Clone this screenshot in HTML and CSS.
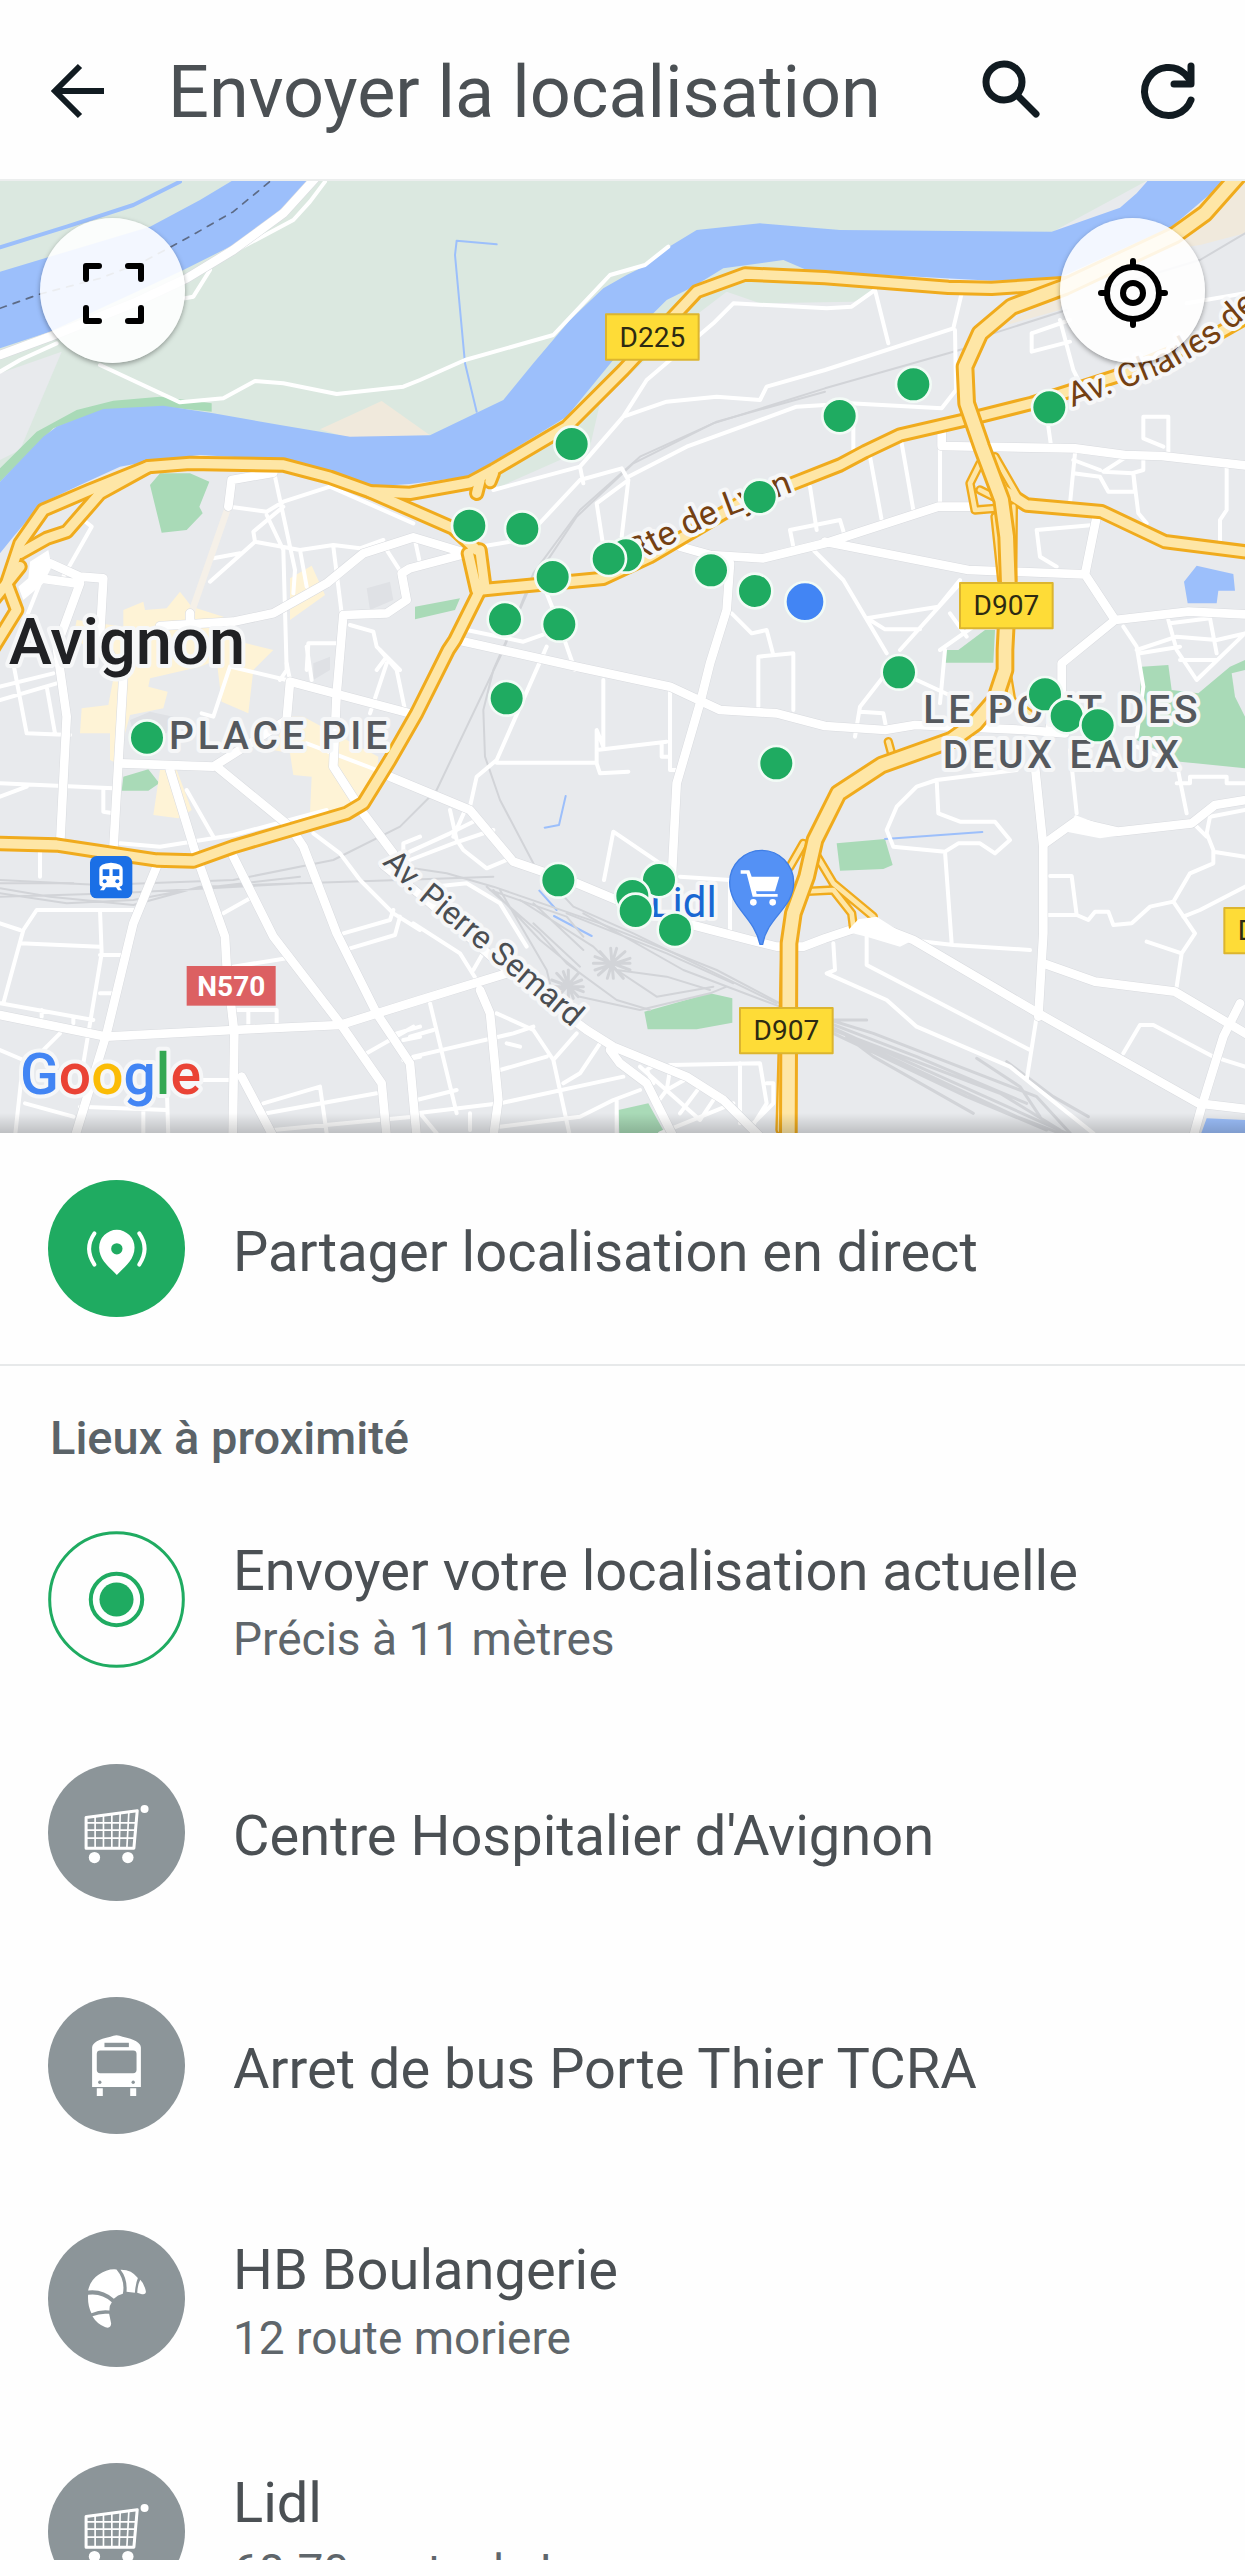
FILE: index.html
```html
<!DOCTYPE html>
<html lang="fr">
<head>
  <meta charset="UTF-8">
  <meta name="viewport" content="width=device-width, initial-scale=1.0">
  <title>Envoyer la localisation</title>
  <link rel="stylesheet" href="styles.css">
</head>
<body>
  <header class="topbar">
    <button type="button" class="icon-btn" aria-label="Retour">
      <svg viewBox="0 0 72 72"><path d="M62 37H13M38 12L13 37l25 25" fill="none" stroke="#111b21" stroke-width="6"/></svg>
    </button>
    <h1>Envoyer la localisation</h1>
    <button type="button" class="icon-btn" aria-label="Rechercher">
      <svg viewBox="0 0 72 72"><g fill="none" stroke="#111b21" stroke-width="7" stroke-linecap="round"><circle cx="29" cy="28" r="18"/><path d="M43 42l18 18"/></g></svg>
    </button>
    <button type="button" class="icon-btn" aria-label="Actualiser">
      <svg viewBox="0 0 72 72"><g fill="none" stroke="#111b21" stroke-width="7" stroke-linecap="round" stroke-linejoin="round"><path d="M60 46A24 24 0 1 1 54 20L59 26"/><path d="M60 12V30H43"/></g></svg>
    </button>
  </header>

  <section class="map">
    <svg class="map-canvas" viewBox="0 33 3735 2856" role="img" aria-label="Carte d'Avignon">
      <defs>
        <!-- main yellow roads -->
        <g id="roads-main">
          <path d="M-30 1450L50 1320 20 1240 60 1120 130 1020 270 960 445 890 570 880 850 885 990 922 1110 965 1230 970 1410 938 1480 900 1700 770 1870 600 2090 365 2235 312 2475 323 2845 352 2975 355 3200 340"/>
          <path d="M60 1150L140 1105 200 1085 300 970 445 890M60 1190L-20 1290"/>
          <path d="M1110 965L1360 1075 1430 1140M1405 1150L1430 1260M1440 1140L1455 1255"/>
          <path d="M1440 1260L1810 1225 1950 1160 2220 1000 2380 940 2520 885 2595 845 2700 795 2895 750 3095 700 3345 620 3655 490 3760 430"/>
          <path d="M1440 1260L1365 1410 1345 1440 1250 1630 1170 1770 1090 1900 1040 1930 870 1980 700 2030 580 2073 470 2070 300 2045 170 2025 -20 2020"/>
          <path d="M1430 970L1440 930M1470 935L1480 910"/>
          <path d="M2945 830L3010 960 3080 1005 3305 1025 3495 1115 3770 1150"/>
        </g>
        <!-- D907 expressway -->
        <g id="roads-wide">
          <path d="M3730 0L3615 130 3525 195 3365 270 3195 350 3035 410 2940 490 2895 590 2900 700 2945 830 3005 990 3020 1100 3025 1240 3015 1440 3015 1500 2985 1590 2925 1660 2855 1710 2645 1785 2515 1870 2445 2010 2420 2120 2380 2230 2367 2320 2365 2900"/>
        </g>
        <g id="roads-ramp">
          <path d="M2940 880L2910 940 2925 1020 2985 1015M2940 960L2990 985M2985 1040L3005 1230M3040 1010L3038 1230M2985 860L3060 990"/>
          <path d="M3020 1500L3035 1590 3100 1640M2665 1715L2680 1770M2440 2040L2500 2140 2620 2240M2405 2165L2500 2160 2555 2230 2560 2270M2410 2020L2370 2090M2355 2330L2340 2880"/>
        </g>
        <!-- wide white streets -->
        <g id="streets">
          <path d="M0 555L150 500 400 400 560 325 700 240 850 130 950 20"/>
          <path d="M685 1010L695 930 820 908M570 1360V1330M480 1368L700 1355 820 1330 980 1240 1090 1150 1240 1102 1400 1150 1230 1195 1205 1210 1220 1290 1160 1330 1030 1335 1010 1570 1000 1790 1090 1930 1180 2050"/>
          <path d="M150 1180L240 1220 310 1225 300 1400 370 1520 355 1780 340 2040M230 1240L120 1225M240 1240L170 1430 200 1640 180 2030"/>
          <path d="M360 1780L640 1790 860 1650 870 1535 1230 1630M510 1800L590 2060 675 2300 680 2390 703 2590 698 2900M650 1790L870 1970 910 2030 1010 2290 1130 2530 1230 2680 1250 2900M700 2060L820 2300 1020 2560 1145 2740 1160 2900M470 2090L400 2260 320 2590 225 2900"/>
          <path d="M0 2535L320 2600 700 2580 1020 2565 1260 2490 1520 2410M725 2720L820 2900M1440 2460L1470 2530 1495 2790 1480 2900M1170 1820L1410 1920 1540 2075 1730 2140 1850 2190 2020 2250 2250 2310 2330 2330 2410 2330 2475 2305 2610 2260 2740 2310 3115 2530 3595 2800 3760 2820"/>
          <path d="M1150 2085L1280 2190 1520 2400 1760 2580 1840 2630 2060 2720 2170 2790 2280 2900M1830 2640L1860 2680 1940 2740 2020 2900"/>
          <path d="M1370 1410L1730 1490 2010 1550 2160 1620 2330 1630 2475 1668 2655 1680 2745 1665 3075 1680 3195 1690M2190 1180L2180 1320 2130 1480 2100 1600 2030 1840 2015 2130"/>
          <path d="M2040 1130L2130 1155 2290 1165 2475 1120 2815 1010 2925 1010M2475 1115L2905 1200 3255 1213 3290 1040M3255 1213L3345 1350 3565 1325 3770 1335M3345 1350L3185 1480 3185 1570 3150 1670M3105 1790L3130 2030 3130 2290 3115 2540M2825 780V828L3225 835 3375 855 3485 858 3770 890"/>
          <path d="M3135 2020L3225 1955 3355 1985 3575 1960 3645 1905 3770 1885M3130 2380L3285 2435 3525 2465 3770 2610M3720 2500L3670 2600 3605 2810 3580 2900"/>
        </g>
      </defs>

      <!-- land, parks and water -->
      <rect class="land" width="3735" height="2900"/>
      <path class="field" d="M0 0H3500L3150 190 2700 240 2630 365 2560 395 2280 400 2180 365 2030 480 1800 700 1770 830 1500 950 1440 930 1230 870 900 820 500 760 300 780 0 950z"/>
      <path class="land" d="M0 610L185 545 60 840 0 870z"/>
      <path class="sand" d="M960 778L1145 693 1290 796 1050 805zM3590 90L3735 20V190L3600 225 3500 240zM3195 370L3000 470 3180 420z"/>
      <path class="park" d="M0 895L110 785 230 720 340 692 480 680 635 700V725L490 710 310 722 160 775 0 935zM480 910L450 945 485 1088 560 1080 608 1030 598 1010 628 935 570 910zM1245 1310L1380 1285 1365 1320 1245 1348zM2835 1478V1440H2875L2955 1380H2985L2980 1478zM3425 1490L3505 1485 3515 1560 3595 1570 3690 1490 3735 1470V1795L3540 1775 3410 1710zM2510 2020L2655 2007 2678 2085 2650 2097 2520 2102zM1933 2525L2130 2470 2197 2485V2558L2090 2578 1943 2578zM1855 2820L1945 2800 1995 2890H1858zM370 1820L445 1798 478 1840 445 1862H365z"/>
      <path class="land" d="M3695 1510L3735 1500V1640L3705 1580z"/>
      <path class="water" d="M0 935L130 800 170 770 310 717 490 707 640 730 840 765 1050 800 1290 796 1510 690 1600 580 1710 450 1810 355 1880 315 1930 290 2000 235 2090 180 2280 160 2520 180 3155 185 3360 113 3410 70 3445 30H3680L3515 170 3175 325 2975 332 2475 305 2420 300 2350 270 2170 295 2080 350 2000 390 1930 460 1700 740 1480 875 1400 920 1230 942 1110 950 980 905 850 870 600 855 440 875 360 890 240 945 125 1000 40 1100 0 1150z"/>
      <path class="water" d="M0 305L250 230 450 170 600 90 700 30H925L870 95 720 215 550 300 400 370 150 485 0 535zM3590 1187L3700 1212 3705 1262H3655L3650 1300H3563L3552 1235zM3620 2845L3735 2850V2900H3600z"/>
      <path class="canal" d="M0 232L200 170 400 105 540 35"/>
      <path class="canal thin" d="M1490 223L1370 212 1365 255 1395 580 1430 725M1697 1878L1677 1965 1634 1973M1618 2162L1670 2220M1662 2238L1775 2298M2655 2007L2947 1986"/>
      <path class="ferry" d="M0 415L120 372 300 325 430 275 560 205 700 125 815 30"/>

      <!-- shopping areas -->
      <path class="district" d="M370 1320L430 1295 435 1320 500 1315 540 1265 575 1310 670 1340 700 1410 820 1440 760 1500 745 1630 665 1595 650 1470 600 1490 450 1525 445 1550 503 1565 490 1615 390 1635 375 1690 350 1780 330 1770V1690L240 1690 245 1615 325 1605 345 1500 220 1400 230 1350 370 1370zM870 1225L935 1187 975 1275 870 1350zM480 1800H530L575 1920 535 1945 460 1935zM860 1640H910L1135 1760 1130 1820 1050 1910 930 1930 935 1820 880 1815 870 1750 820 1740z"/>
      <path class="block" d="M1100 1255L1170 1235 1180 1290 1110 1320zM390 1650L450 1625 520 1640 500 1690 400 1690zM940 1480L990 1460V1500L940 1530z"/>

      <!-- railways -->
      <g class="rail">
        <path d="M2950 520L2475 655 2140 760 1920 860 1740 1020 1600 1210 1510 1440 1310 1860 1200 1970 1000 2070 700 2130 300 2145 0 2130"/>
        <path d="M2980 490L3200 420M3300 360L3600 270 3735 190M2475 665L2150 755 1900 880 1730 1040 1590 1250 1480 1500 1450 1620 1455 1760 1500 1890 1600 2080 1720 2210 1900 2290 2330 2500"/>
        <path d="M0 2140H220M0 2155L150 2180 400 2205 600 2150 1200 2130 1480 2120M0 2170L200 2200 400 2190 560 2160 900 2120M0 2180L350 2170 900 2140"/>
        <path d="M1240 2095L1340 2110 1480 2150 1800 2260 2150 2400 2340 2500M1460 2150L1620 2290 1700 2380 1850 2490 1950 2520M1470 2160L1700 2240 1750 2300M1480 2160L1620 2310 1730 2400M1500 2160L1640 2400 1660 2480"/>
        <path d="M1560 2190L1780 2330 1850 2400 1970 2480 2140 2450M1600 2200L1750 2340M1700 2230L2000 2350 2200 2440M1750 2230L2050 2400 2340 2510M1600 2260L1740 2390M1740 2480L1920 2520 2130 2470 2180 2450M1850 2400L2000 2420 2130 2460"/>
      </g>
      <g class="rail yard">
        <path d="M1780 2380H1890M1795 2415L1875 2345M1800 2345L1870 2425M1832 2335L1840 2425M1785 2360L1890 2400M1785 2400L1890 2365M1850 2335L1822 2425M1655 2450H1750M1670 2410L1735 2480M1655 2430L1750 2465M1705 2400V2490M1735 2410L1670 2485M1690 2405L1720 2485M1660 2465L1745 2430"/>
        <path d="M2490 2550L2620 2590 3110 2780 3220 2900M2490 2560L2750 2660 3080 2800M2490 2570L2600 2620 3200 2890M2500 2590L2900 2780 3140 2880M2540 2600L2620 2660 2920 2830M2500 2580L3000 2770 3180 2880M2930 2665L3060 2750 3120 2840M3020 2675L3160 2780 3265 2840M2560 2610L3050 2840 3180 2890M2500 2550H2600"/>
      </g>

      <!-- small streets -->
      <g class="lane">
        <path d="M0 605L60 570 170 520M720 235L880 150 930 95 975 35M555 385L580 380 630 300M300 585L540 697 670 685 765 633 850 640 1010 672 1210 650 1260 630 1395 570 1660 495 1830 315 1935 285 2005 230"/>
        <path d="M690 1010L800 1025 850 995 990 950 1240 1060M825 920L885 1200 880 1270M800 1035L850 1140 860 1500 840 1530M850 1010L760 1085 765 1115 630 1235M640 1165L720 1150M765 1115L900 1140 1000 1125 1080 1135 1150 1110M900 1140L920 1250M1000 1130L1025 1330M1160 1140L1205 1210M1245 1110L1260 1180M250 1050L275 1070 190 1220M120 1240L80 1340M920 1500L925 1420H1010M1050 1365L1120 1385 1130 1430 1200 1500M1130 1500L1160 1460"/>
        <path d="M40 1480L80 1690 210 1695M0 1590L170 1540M0 1550L160 1510M140 1550L165 1690M0 1840L340 1855M0 1880L80 1850M310 1860V1925L340 1930M120 2040V2120M360 2020L480 2030 700 1995 980 1920M690 1490L640 1640 605 1630M690 1490L860 1530M860 1480L870 1530M920 1430L935 1530M1110 1630L1160 1480M1140 1440L1190 1500 1215 1620M920 1720L1130 1800M560 1860L640 2000M940 1990L1020 2050 1080 2130 1180 2230 1260 2280"/>
        <path d="M400 2220H110L70 2280 10 2500M60 2320L300 2330M300 2220L305 2350 270 2560 250 2680M300 2355H360M300 2470H340M0 2260L60 2280M0 2500L280 2550M125 2520V2540M220 2545V2560M180 2590L110 2660M0 2640L70 2670 45 2900M75 2800L220 2840M240 2810L500 2820M430 2820V2900M500 2740L505 2900M610 2730H690M670 2230L750 2185M700 2390L860 2365M700 2520H830V2560M745 2520V2570M790 2800L960 2750 980 2890M800 2830L1130 2770M1100 2650L1240 2570M820 2880L1240 2840M1030 2290L1170 2250 1180 2220M1050 2335L1185 2295 1200 2240M1190 2590L1260 2570M1210 2610L1260 2600M1210 2670L1260 2660M1210 2050V2020L1260 2000"/>
        <path d="M1300 2150L1400 2140 1500 2200 1580 2330M1240 2260L1380 2350 1430 2430M1420 2400L1460 2330M1230 2045L1350 1990 1430 1950M1350 1920L1370 2010 1390 2040 1460 2095 1520 2070M1230 2070L1360 2020 1480 1980M1360 2000L1400 1910"/>
        <path d="M1480 960L1740 890 1870 740 1940 630 2140 460 2200 400 2480 415 2555 410 2625 360 2665 520M1870 740L2000 695 2150 680 2280 690 2300 650 2475 600 2860 475 2885 370M2865 480L2868 660 2825 715 2550 700M1600 1080L1740 930 1865 895 1885 930 1865 1100M1885 930L1790 1000 1810 1130M1740 890L1750 940M1885 920L2060 830 2390 710 2475 705M1440 1130L1560 1110M1640 1270L1660 1320M1400 1380L1570 1415 1640 1390M1640 1430L1490 1770 1430 1820 1410 1910M1690 1400L1725 1500M1490 1778H1790M1810 1530V1730L1790 1680V1780L1800 1810 1885 1805M1790 1740L2000 1715M2010 1560V1800H2030M1985 1720V1760H2005"/>
        <path d="M2430 950L2450 1080M2370 1080L2520 1050 2535 1100M2370 1080L2380 1130M2440 1140L2530 1230 2660 1450M2195 1330L2255 1390 2300 1380 2320 1455M2275 1610V1460L2380 1450V1620M2600 1345L2815 1310 2880 1230M2610 1350L2655 1378H2760M2700 1440L2880 1240M2850 1330L2900 1400M2565 1700L2580 1610 2650 1520M2750 1530L2880 1590M2580 1625L2650 1630 2660 1680M2835 1440L2820 1600M2820 1440L2920 1370M1812 2130L1840 1985 1980 2080M2040 2120L2190 2130V2280"/>
        <path d="M2610 860L2645 1050M2705 820L2740 1020M2820 830V1010M2560 740V840M3145 770L3152 820M3095 490L3210 450M3095 490V545L3210 515M3180 450L3220 600 3235 630M3430 740H3505V850M3430 740V805L3490 830M3225 850L3210 1000M3220 910L3300 920 3325 965H3405L3400 910 3310 905 3380 860M3400 910L3415 1030 3440 1060M3430 870V900L3395 910M3220 870L3300 900M3680 890V1020L3660 1050V1120M3110 1080L3280 1065M3110 1080L3120 1160 3170 1190M3560 400L3735 370"/>
        <path d="M3370 1370L3410 1430 3430 1550 3410 1700M3505 1350L3530 1440 3590 1530 3735 1390M3510 1360L3630 1345 3650 1450M3410 1440L3530 1400 3650 1410 3735 1390M3420 1450L3540 1430M3540 1470H3650M3410 1730L3530 1780 3560 1930M3530 1840H3570V1820H3680V1840H3735"/>
        <path d="M3050 1800L2810 1830 2750 1850 2690 1910 2660 1980 2680 2030 2835 2045 2875 2020H2940L2985 2050 3030 2010 2985 1955H2880L2815 1930 2810 1830M2835 2045L2855 2320M2730 2310L2860 2325 3090 2340M3210 1740L3230 1930M3150 2118H3215L3230 2235 3145 2235M3230 2235L3265 2250 3285 2225H3325L3340 2265 3395 2260 3450 2210 3520 2195 3570 2110 3640 2080V2040L3620 1990 3630 1940 3735 1920M3640 2045L3735 2060M3590 1970L3620 2000M3520 2195L3585 2290 3545 2350 3530 2450M3545 2350L3440 2315M3550 2240L3600 2220 3735 2150M2600 2290V2385L3090 2640M3110 2540L3080 2730M2500 2320L2505 2400 2480 2410 2660 2490 2750 2570 3030 2690 3280 2890M3370 2650L3420 2565H3460L3640 2660 3735 2690"/>
        <path d="M1290 2500L1370 2830M1240 2660L1540 2590 1600 2570M1230 2600L1300 2580M1250 2790L1370 2760M1250 2830L1500 2800 1870 2720M1490 2530L1600 2580 1660 2670 1710 2900M1730 2590L1660 2670M1800 2620L1740 2710 1690 2740M1500 2700L1640 2660M1500 2870L1740 2840 1840 2790 1920 2760M1850 2790V2900M1260 2830L1310 2890M1410 2830V2880M1520 2620L1560 2630"/>
        <path d="M1920 2690L2100 2850M1960 2740L1940 2700 1970 2680M2000 2760L2010 2700M1970 2800L2000 2760 2070 2720M2040 2830L2100 2750M2100 2850L2140 2790M1980 2890L2200 2800M2010 2685L2280 2680 2300 2800 2250 2880M2220 2680V2860M2300 2740H2320V2800L2260 2860"/>
      </g>
      <path class="square" d="M685 1010L570 1340"/>

      <use href="#streets" class="street-edge"/>
      <use href="#streets" class="street"/>

      <use href="#roads-ramp" class="ramp-edge"/>
      <use href="#roads-main" class="main-edge"/>
      <use href="#roads-ramp" class="ramp"/>
      <use href="#roads-main" class="main"/>
      <use href="#roads-wide" class="wide-edge"/>
      <use href="#roads-wide" class="wide"/>
      <path class="plaza" d="M90 1175L145 1140 155 1190 130 1240 70 1290 55 1250 85 1225zM2540 2285L2575 2248 2630 2240 2740 2310 2700 2330 2600 2300zM3200 1985L3225 1935 3320 1970 3400 1990 3300 2005z"/>

      <!-- road numbers -->
      <g class="shield">
        <rect x="1818" y="433" width="278" height="136"/><text x="1957" y="530">D225</text>
        <rect x="2880" y="1239" width="278" height="136"/><text x="3019" y="1336">D907</text>
        <rect x="2220" y="2514" width="278" height="136"/><text x="2359" y="2611">D907</text>
        <rect x="3673" y="2214" width="278" height="136"/><text x="3812" y="2311">D907</text>
      </g>
      <rect class="shield-n" x="560" y="2388" width="267" height="119"/>
      <text class="shield-n-text" x="694" y="2477">N570</text>

      <!-- place and street names -->
      <path id="lyon" fill="none" d="M1905 1180L2040 1108 2180 1040 2500 920"/>
      <path id="charles" fill="none" d="M3217 712L3370 658 3500 605 3640 525 3860 340"/>
      <path id="semard" fill="none" d="M1145 2080L1260 2192 1480 2372 1800 2645"/>
      <text class="label route"><textPath href="#lyon">Rte de Lyon</textPath></text>
      <text class="label route"><textPath href="#charles">Av. Charles de</textPath></text>
      <text class="label street-name"><textPath href="#semard">Av. Pierre Semard</textPath></text>
      <text class="label city" x="26" y="1482">Avignon</text>
      <text class="label area" x="507" y="1737">PLACE PIE</text>
      <text class="label area" x="2770" y="1658">LE PONT DES</text>
      <text class="label area" x="2828" y="1795">DEUX EAUX</text>
      <text class="label shop" x="1950" y="2240">Lidl</text>

      <!-- train station -->
      <g transform="translate(270 2058)">
        <rect width="127" height="127" rx="20" fill="#1a6fe6"/>
        <path fill="#fff" d="M28 40Q28 22 63 20Q98 22 98 40V82Q98 92 88 92L96 103H84L78 94H48L42 103H30L38 92Q28 92 28 82z"/>
        <path fill="#1a6fe6" d="M38 40H58V60H38zM68 40H88V60H68z"/>
        <circle cx="44" cy="76" r="6" fill="#1a6fe6"/><circle cx="82" cy="76" r="6" fill="#1a6fe6"/>
      </g>

      <!-- supermarket pin -->
      <path fill="#5491f5" stroke="#3f7ee6" stroke-width="4" d="M2280 2323C2262 2240 2189 2215 2189 2137A95 95 0 0 1 2381 2137C2381 2215 2302 2240 2288 2323z"/>
      <path fill="#fff" d="M2222 2101H2248L2255 2120H2338L2325 2164H2268L2270 2172H2333V2180H2258L2240 2111H2222z"/>
      <circle cx="2260" cy="2197" r="10" fill="#fff"/><circle cx="2318" cy="2197" r="10" fill="#fff"/>

      <g class="pin">
        <circle cx="1715" cy="822" r="52"/><circle cx="1408" cy="1067" r="52"/><circle cx="1567" cy="1076" r="52"/>
        <circle cx="1878" cy="1156" r="52"/><circle cx="1826" cy="1166" r="52"/><circle cx="1658" cy="1221" r="52"/>
        <circle cx="1515" cy="1348" r="52"/><circle cx="1678" cy="1363" r="52"/><circle cx="2133" cy="1201" r="52"/>
        <circle cx="2265" cy="1263" r="52"/><circle cx="2279" cy="981" r="52"/><circle cx="2519" cy="738" r="52"/>
        <circle cx="2740" cy="643" r="52"/><circle cx="3148" cy="712" r="52"/><circle cx="2697" cy="1507" r="52"/>
        <circle cx="3135" cy="1573" r="52"/><circle cx="3200" cy="1638" r="52"/><circle cx="3293" cy="1666" r="52"/>
        <circle cx="1520" cy="1585" r="52"/><circle cx="2329" cy="1780" r="52"/><circle cx="1675" cy="2131" r="52"/>
        <circle cx="1977" cy="2130" r="52"/><circle cx="1897" cy="2178" r="52"/><circle cx="1907" cy="2223" r="52"/>
        <circle cx="2025" cy="2279" r="52"/><circle cx="441" cy="1703" r="52"/>
        <circle class="me" cx="2415" cy="1295" r="59"/>
      </g>

      <text class="label google" x="60" y="2773"><tspan fill="#4285f4">G</tspan><tspan fill="#ea4335">o</tspan><tspan fill="#fbbc05">o</tspan><tspan fill="#4285f4">g</tspan><tspan fill="#34a853">l</tspan><tspan fill="#ea4335">e</tspan></text>
    </svg>

    <button type="button" class="map-btn map-btn-left" aria-label="Plein écran">
      <svg viewBox="0 0 145 145"><path d="M46 61V48H59M88 48H101V61M101 90V103H88M59 103H46V90" fill="none" stroke="#000" stroke-width="6" stroke-linecap="round" stroke-linejoin="round"/></svg>
    </button>
    <button type="button" class="map-btn map-btn-right" aria-label="Ma position">
      <svg viewBox="0 0 145 145"><g fill="none" stroke="#000" stroke-width="6" stroke-linecap="round"><circle cx="73" cy="75" r="26"/><circle cx="73" cy="75" r="10"/><path d="M73 43V49M73 101V107M41 75H47M99 75H105"/></g></svg>
    </button>
  </section>

  <button type="button" class="row live">
    <svg class="avatar" viewBox="0 0 410 410">
      <circle cx="205" cy="205" r="205" fill="#1fab61"/>
      <path fill="#fff" d="M206 284C185 262 153 240 153 202A53 53 0 0 1 259 202C259 240 227 262 206 284z"/>
      <circle cx="206" cy="206" r="17" fill="#1fab61"/>
      <path d="M139 160Q107 206 139 253M273 160Q305 206 273 253" fill="none" stroke="#fff" stroke-width="12" stroke-linecap="round"/>
    </svg>
    <span class="text"><span class="name">Partager localisation en direct</span></span>
  </button>

  <main class="places">
    <h2>Lieux à proximité</h2>
    <button type="button" class="row">
      <svg class="avatar" viewBox="0 0 410 410">
        <g fill="none" stroke="#1fab61"><circle cx="205" cy="205" r="200" stroke-width="9"/><circle cx="205" cy="205" r="77" stroke-width="12"/></g>
        <circle cx="205" cy="205" r="51" fill="#1fab61"/>
      </svg>
      <span class="text"><span class="name">Envoyer votre localisation actuelle</span><span class="detail">Précis à 11 mètres</span></span>
    </button>
    <button type="button" class="row">
      <svg class="avatar" viewBox="55 74 410 410">
        <g id="cart">
          <circle cx="260" cy="279" r="205" fill="#8c9599"/>
          <path d="M169 234L322 214 312 326H169zM196 231V326M221 228V326M246 225V326M271 222L268 326M297 218L291 326M169 250H318M169 272H317M169 296H315" fill="none" stroke="#fff" stroke-width="5"/>
          <path d="M169 234L322 214 312 326H169z" fill="none" stroke="#fff" stroke-width="9" stroke-linejoin="round"/>
          <g fill="#fff"><circle cx="344" cy="209" r="12"/><circle cx="194" cy="354" r="17"/><circle cx="294" cy="354" r="17"/></g>
        </g>
      </svg>
      <span class="text"><span class="name">Centre Hospitalier d'Avignon</span></span>
    </button>
    <button type="button" class="row">
      <svg class="avatar" viewBox="55 774 410 410">
        <circle cx="260" cy="979" r="205" fill="#8c9599"/>
        <path fill="#fff" d="M187 1043V925Q188 904 242 893Q260 884 278 893Q332 904 333 925V1043zM201 1047H219V1070H201zM301 1047H319V1070H301z"/>
        <g fill="#8c9599"><rect x="224" y="911" width="73" height="13"/><rect x="201" y="934" width="119" height="68" rx="10"/><circle cx="210" cy="1029" r="5"/><circle cx="310" cy="1029" r="5"/></g>
      </svg>
      <span class="text"><span class="name">Arret de bus Porte Thier TCRA</span></span>
    </button>
    <button type="button" class="row">
      <svg class="avatar" viewBox="0 0 410 410">
        <circle cx="205" cy="205" r="205" fill="#8c9599"/>
        <path fill="#fff" d="M120 181Q127 150 150 135Q178 115 205 118Q232 150 224 191Q209 194 197 206Q165 176 120 181zM217 119Q250 118 269 144Q262 160 260 188L235 185Q238 145 217 119zM276 149Q288 160 293 184Q293 194 281 192L267 188Q268 165 276 149zM120 194Q160 188 191 216Q183 226 184 241Q155 238 130 249Q118 225 120 194zM133 258Q157 248 183 251L189 280Q188 296 172 291Q146 281 133 258z"/>
      </svg>
      <span class="text"><span class="name">HB Boulangerie</span><span class="detail">12 route moriere</span></span>
    </button>
    <button type="button" class="row">
      <svg class="avatar" viewBox="55 74 410 410"><use href="#cart"/></svg>
      <span class="text"><span class="name">Lidl</span><span class="detail">68-70 route de Lyon</span></span>
    </button>
  </main>
</body>
</html>
```
FILE: styles.css
```css
* {
  box-sizing: border-box;
}

body {
  margin: 0;
  height: 100vh;
  display: flex;
  flex-direction: column;
  overflow: hidden;
  background-color: #fefefe;
  color: #4b5054;
  font-family: Roboto, "Liberation Sans", sans-serif;
}

button {
  padding: 0;
  border: none;
  background: none;
  color: inherit;
  font: inherit;
  cursor: pointer;
}

svg {
  display: block;
}

.topbar {
  flex: none;
  display: flex;
  align-items: center;
  gap: 84px;
  height: 181px;
  padding: 0 42px;
  border-bottom: 2px solid #eceeee;
}

.topbar h1 {
  flex: 1;
  margin: 0 0 0 -30px;
  padding-top: 6px;
  font-size: 72px;
  line-height: 84px;
  font-weight: 400;
  white-space: nowrap;
}

.icon-btn {
  flex: none;
  width: 72px;
  height: 72px;
}

/* map */
.map {
  flex: none;
  position: relative;
}

.map::after {
  content: "";
  position: absolute;
  left: 0;
  right: 0;
  bottom: 0;
  height: 20px;
  background: linear-gradient(rgba(0, 0, 0, 0), rgba(0, 0, 0, 0.18));
}

.map-canvas {
  width: 100%;
  height: auto;
  fill: none;
  stroke-linejoin: round;
  stroke-linecap: round;
}

.land { fill: #e8eaed; }
.field { fill: #dbe8e0; }
.sand { fill: #f0e9dc; }
.park { fill: #a9dab7; }
.water { fill: #9cbffb; }
.district { fill: #fef3d6; }
.block { fill: #dfe1e5; }
.plaza { fill: #fff; }

.canal {
  stroke: #9cbffb;
  stroke-width: 12;
}

.thin {
  stroke-width: 6;
}

.ferry {
  stroke: #5d6b86;
  stroke-width: 5;
  stroke-dasharray: 20 22;
}

.rail {
  stroke: #d2d4d8;
  stroke-width: 6;
}

.yard {
  stroke-width: 9;
}

.lane {
  stroke: #fff;
  stroke-width: 12;
}

.square {
  stroke: #f5f0e8;
  stroke-width: 20;
}

.street-edge {
  stroke: #d9dbdf;
  stroke-width: 29;
}

.street {
  stroke: #fff;
  stroke-width: 26;
}

.ramp-edge,
.main-edge,
.wide-edge {
  stroke: #f0ab1d;
}

.ramp,
.main,
.wide {
  stroke: #fee6a6;
}

.ramp-edge { stroke-width: 28; }
.ramp { stroke-width: 14; }
.main-edge { stroke-width: 46; }
.main { stroke-width: 28; }
.wide-edge { stroke-width: 56; }
.wide { stroke-width: 38; }

.shield rect {
  fill: #fedc37;
  stroke: #dcb52f;
  stroke-width: 6;
}

.shield text {
  fill: #2d2a12;
  font-size: 84px;
  text-anchor: middle;
}

.shield-n {
  fill: #dc6062;
}

.shield-n-text {
  fill: #fff;
  font-size: 84px;
  font-weight: 700;
  text-anchor: middle;
}

.label {
  paint-order: stroke;
  stroke: #f6f7f8;
  stroke-width: 24;
}

.city {
  fill: #202124;
  font-size: 195px;
  font-weight: 500;
}

.area {
  fill: #55595e;
  font-size: 117px;
  font-weight: 500;
  letter-spacing: 0.1em;
}

.route {
  fill: #744012;
  font-size: 102px;
}

.street-name {
  fill: #4a4e52;
  font-size: 96px;
}

.shop {
  fill: #1967d2;
  font-size: 126px;
}

.google {
  font-size: 171px;
  font-weight: 500;
}

.pin circle {
  fill: #1fab61;
  stroke: #f2fbf6;
  stroke-width: 8;
}

.pin .me {
  fill: #4285f4;
}

.map-btn {
  position: absolute;
  top: 37px;
  width: 145px;
  height: 145px;
  border-radius: 50%;
  background-color: rgba(255, 255, 255, 0.88);
  box-shadow: 0 2px 5px rgba(0, 0, 0, 0.35);
}

.map-btn-left {
  left: 40px;
}

.map-btn-right {
  right: 40px;
}

/* list */
.row {
  flex: none;
  display: flex;
  align-items: center;
  gap: 48px;
  width: 100%;
  height: 233px;
  padding: 0 48px;
  text-align: left;
}

.live {
  border-bottom: 2px solid #e7e9ea;
}

.avatar {
  flex: none;
  width: 137px;
  height: 137px;
}

.text {
  display: flex;
  flex-direction: column;
  padding-top: 6px;
}

.name {
  font-size: 56px;
  line-height: 72px;
}

.detail {
  color: #5f666b;
  font-size: 46px;
  line-height: 64px;
}

.places {
  flex: 1;
  min-height: 0;
  overflow-y: auto;
  scrollbar-width: none;
}

.places h2 {
  margin: 0;
  padding: 45px 50px 18px;
  color: #5b6368;
  font-size: 47px;
  line-height: 54px;
  font-weight: 500;
}
```
